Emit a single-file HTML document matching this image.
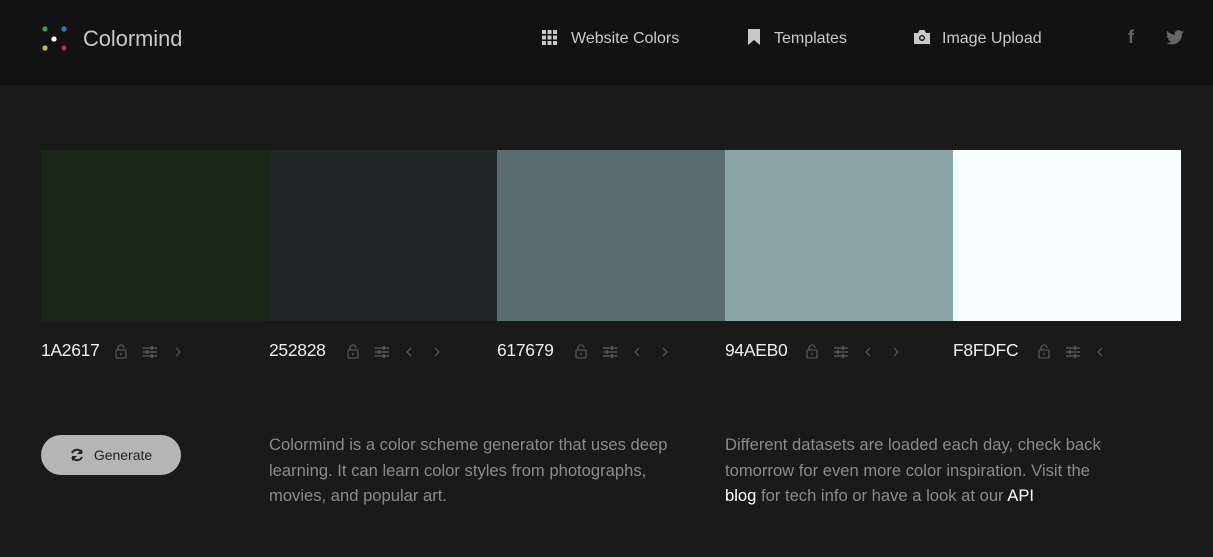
<!DOCTYPE html>
<html><head><style>
*{margin:0;padding:0;box-sizing:border-box}
body{width:1213px;height:557px;background:#1a1a1a;font-family:"Liberation Sans",sans-serif;overflow:hidden;position:relative;color:#aaa}
.hdr{position:absolute;left:0;top:0;width:1213px;height:85px;background:#121212}
.abs{position:absolute}
.nav{position:absolute;top:30px;font-size:16px;color:#c8c8c8}
.sw{position:absolute;top:150px;height:171px;width:228px}
.lbl{position:absolute;top:340px;font-size:17.5px;color:#eee;display:flex;align-items:center;letter-spacing:-0.3px}
.lbl svg{margin-left:12px}
.txt{position:absolute;top:432px;font-size:16.6px;line-height:25.5px;color:#8a8a8a;width:430px}
.txt b{color:#fff;font-weight:normal}
</style></head><body>
<div class="hdr"></div>
<svg class="abs" style="left:40px;top:25px" width="30" height="28">
<circle cx="5" cy="4" r="2.6" fill="#3a9a5a"/><circle cx="24" cy="4" r="2.6" fill="#3a6fd0"/>
<circle cx="14" cy="14" r="2.6" fill="#fff"/><circle cx="5" cy="23" r="2.6" fill="#c8b84a"/><circle cx="24" cy="23" r="2.6" fill="#b0306a"/></svg>
<div class="abs" style="left:83px;top:26px;font-size:21.8px;color:#c8c8c8">Colormind</div>

<svg class="abs" style="left:542px;top:30px" width="15" height="15" fill="#c8c8c8"><rect x="0" y="0" width="4" height="4"/><rect x="5.5" y="0" width="4" height="4"/><rect x="11" y="0" width="4" height="4"/><rect x="0" y="5.5" width="4" height="4"/><rect x="5.5" y="5.5" width="4" height="4"/><rect x="11" y="5.5" width="4" height="4"/><rect x="0" y="11" width="4" height="4"/><rect x="5.5" y="11" width="4" height="4"/><rect x="11" y="11" width="4" height="4"/></svg>
<div class="nav" style="left:571px">Website Colors</div>
<svg class="abs" style="left:748px;top:29px" width="12" height="16"><path d="M0 0H12V16L6 11L0 16Z" fill="#c8c8c8"/></svg>
<div class="nav" style="left:774px">Templates</div>
<svg class="abs" style="left:914px;top:30px" width="16" height="14"><path d="M0 3H4L5.5 0H10.5L12 3H16V14H0Z" fill="#c8c8c8"/><circle cx="8" cy="8" r="3" fill="#121212"/><circle cx="8" cy="8" r="1.6" fill="#c8c8c8"/></svg>
<div class="nav" style="left:942px">Image Upload</div>
<div class="abs" style="left:1128px;top:27px;font-size:18px;color:#666;font-weight:bold">f</div>
<svg class="abs" style="left:1166px;top:30px" width="18" height="15"><path d="M18 2a7 7 0 0 1-2 .6 3.6 3.6 0 0 0 1.6-2 7 7 0 0 1-2.3.9A3.6 3.6 0 0 0 9 4.7 10 10 0 0 1 1.2.9 3.6 3.6 0 0 0 2.3 5.7 3.6 3.6 0 0 1 .7 5.3a3.6 3.6 0 0 0 2.9 3.5 3.6 3.6 0 0 1-1.6.1 3.6 3.6 0 0 0 3.4 2.5A7.3 7.3 0 0 1 0 12.9 10.3 10.3 0 0 0 5.6 14.5c6.8 0 10.5-5.6 10.5-10.5v-.5A7.4 7.4 0 0 0 18 2z" fill="#666"/></svg>

<div class="sw" style="left:41px;background:#1A2617"></div>
<div class="sw" style="left:269px;background:#202526"></div>
<div class="sw" style="left:497px;background:#596D70"></div>
<div class="sw" style="left:725px;background:#8BA5A8"></div>
<div class="sw" style="left:953px;background:#F6FDFD"></div>

<svg width="0" height="0" style="position:absolute"><defs>
<g id="lk"><rect x="1" y="6" width="10" height="8" rx="1" fill="none" stroke="#555" stroke-width="1.3"/><path d="M3 6V4a3 3 0 0 1 6 0" fill="none" stroke="#555" stroke-width="1.3"/><circle cx="6" cy="10" r="1" fill="#555"/></g>
<g id="sl" stroke="#555" stroke-width="1.4"><path d="M0 3H14M0 7H14M0 11H14"/><path d="M9 1V5M4 5V9M9 9V13" stroke-width="1.8"/></g>
<g id="rt"><path d="M1 1L5 5L1 9" fill="none" stroke="#555" stroke-width="1.3"/></g>
<g id="lt"><path d="M5 1L1 5L5 9" fill="none" stroke="#555" stroke-width="1.3"/></g>
</defs></svg>

<div class="lbl" style="left:41px">1A2617<svg width="80" height="16"><use href="#lk" x="3" y="1"/><use href="#sl" x="31" y="2"/><use href="#rt" x="63" y="4"/></svg></div>
<div class="lbl" style="left:269px">252828<svg width="110" height="16"><use href="#lk" x="9" y="1"/><use href="#sl" x="37" y="2"/><use href="#lt" x="68" y="4"/><use href="#rt" x="96" y="4"/></svg></div>
<div class="lbl" style="left:497px">617679<svg width="110" height="16"><use href="#lk" x="9" y="1"/><use href="#sl" x="37" y="2"/><use href="#lt" x="68" y="4"/><use href="#rt" x="96" y="4"/></svg></div>
<div class="lbl" style="left:725px">94AEB0<svg width="110" height="16"><use href="#lk" x="7" y="1"/><use href="#sl" x="35" y="2"/><use href="#lt" x="66" y="4"/><use href="#rt" x="94" y="4"/></svg></div>
<div class="lbl" style="left:953px">F8FDFC<svg width="90" height="16"><use href="#lk" x="8" y="1"/><use href="#sl" x="36" y="2"/><use href="#lt" x="67" y="4"/></svg></div>

<div class="abs" style="left:41px;top:435px;width:140px;height:40px;border-radius:20px;background:#b5b5b5;display:flex;align-items:center;justify-content:center;font-size:14px;color:#222">
<svg width="14" height="14" style="margin-right:10px"><path d="M12 5A5.5 5.5 0 0 0 2 5M2 9A5.5 5.5 0 0 0 12 9" fill="none" stroke="#222" stroke-width="2"/><path d="M12 1V6H7Z M2 13V8H7Z" fill="#222"/></svg>Generate</div>

<div class="txt" style="left:269px">Colormind is a color scheme generator that uses deep learning. It can learn color styles from photographs, movies, and popular art.</div>
<div class="txt" style="left:725px;width:390px">Different datasets are loaded each day, check back tomorrow for even more color inspiration. Visit the <b>blog</b> for tech info or have a look at our <b>API</b></div>
</body></html>
